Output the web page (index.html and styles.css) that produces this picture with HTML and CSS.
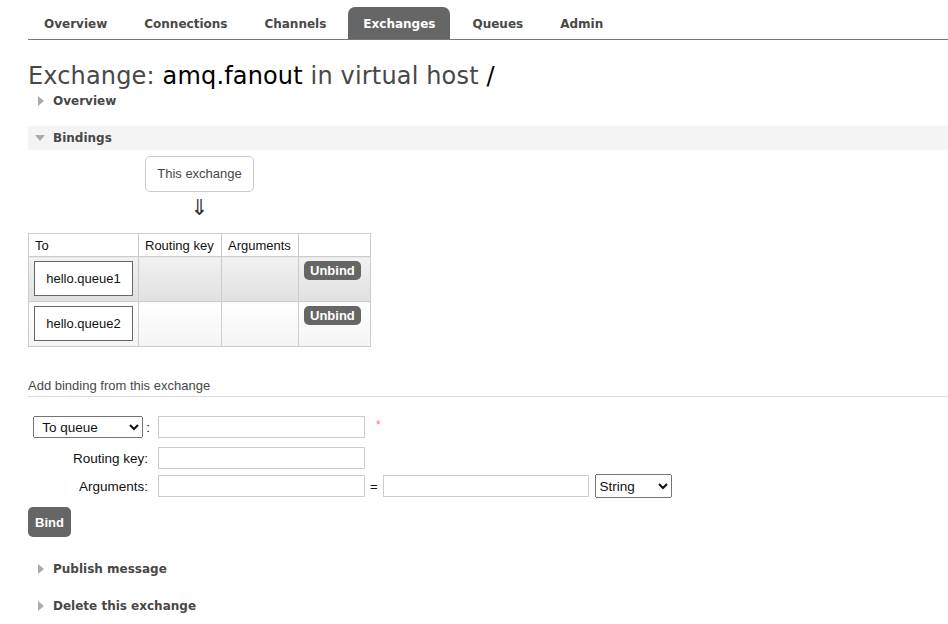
FILE: index.html
```html
<!DOCTYPE html>
<html>
<head>
<meta charset="utf-8">
<title>Exchange: amq.fanout</title>
<link rel="stylesheet" href="styles.css">
</head>
<body>
<div class="page">
  <nav class="tabs">
    <a class="tab">Overview</a>
    <a class="tab">Connections</a>
    <a class="tab">Channels</a>
    <a class="tab active">Exchanges</a>
    <a class="tab">Queues</a>
    <a class="tab">Admin</a>
  </nav>

  <h1 class="title">Exchange: <b>amq.fanout</b> in virtual host <b>/</b></h1>

  <section class="section">
    <h2 class="sec-head"><span class="tri-right"></span>Overview</h2>
  </section>

  <section class="section">
    <h2 class="sec-head open"><span class="tri-down"></span>Bindings</h2>
    <div class="sec-body">
      <div class="diagram">
        <div class="this-ex">This exchange</div>
        <div class="arrow">&#8659;</div>
        <table class="bind-table">
          <colgroup>
            <col class="c1"><col class="c2"><col class="c3"><col class="c4">
          </colgroup>
          <thead>
            <tr><th>To</th><th>Routing key</th><th>Arguments</th><th></th></tr>
          </thead>
          <tbody>
            <tr class="alt1">
              <td><span class="queue-box">hello.queue1</span></td>
              <td></td><td></td>
              <td><button class="btn-sm">Unbind</button></td>
            </tr>
            <tr class="alt2">
              <td><span class="queue-box">hello.queue2</span></td>
              <td></td><td></td>
              <td><button class="btn-sm">Unbind</button></td>
            </tr>
          </tbody>
        </table>
      </div>

      <h3 class="sub-head">Add binding from this exchange</h3>

      <form class="bind-form">
        <div class="frow r1">
          <div class="lbl">
            <select class="sel-dest"><option>To queue</option><option>To exchange</option></select>:
          </div>
          <div class="fld">
            <input class="inp" type="text">
            <span class="req">*</span>
          </div>
        </div>
        <div class="frow r2">
          <div class="lbl">Routing key:</div>
          <div class="fld"><input class="inp" type="text"></div>
        </div>
        <div class="frow r3">
          <div class="lbl">Arguments:</div>
          <div class="fld">
            <input class="inp" type="text">
            <span class="eq">=</span>
            <input class="inp inp2" type="text">
            <select class="sel-type"><option>String</option><option>Number</option><option>Boolean</option></select>
          </div>
        </div>
        <button class="btn" type="button">Bind</button>
      </form>
    </div>
  </section>

  <section class="section">
    <h2 class="sec-head"><span class="tri-right"></span>Publish message</h2>
  </section>

  <section class="section">
    <h2 class="sec-head"><span class="tri-right"></span>Delete this exchange</h2>
  </section>
</div>
</body>
</html>
```

FILE: styles.css
```css
html, body {
  margin: 0;
  padding: 0;
  background: #fff;
}
body {
  font-family: "Liberation Sans", Arial, sans-serif;
  font-size: 13px;
  color: #484848;
  overflow: hidden;
}
.page {
  padding-left: 28px;
}

/* tabs */
.tabs {
  display: flex;
  padding-top: 7px;
  padding-left: 1px;
  border-bottom: 1px solid #777;
}
.tab {
  display: block;
  height: 32px;
  line-height: 34px;
  padding: 0 15px;
  margin-right: 7px;
  font-family: "DejaVu Sans", Verdana, sans-serif;
  font-weight: bold;
  font-size: 12px;
  color: #484848;
  border-radius: 7px 7px 0 0;
}
.tab.active {
  background: #666;
  color: #fff;
}

/* title */
.title {
  margin: 23px 0 0;
  font-family: "DejaVu Sans", Verdana, sans-serif;
  font-size: 24px;
  line-height: 26px;
  letter-spacing: 0.16px;
  font-weight: normal;
  color: #484848;
}
.title b {
  font-weight: normal;
  color: #000;
}

/* sections */
.section {
  margin-bottom: 14px;
}
.sec-head {
  display: flex;
  align-items: center;
  height: 23px;
  margin: 0;
  font-family: "DejaVu Sans", Verdana, sans-serif;
  font-size: 12px;
  font-weight: bold;
  color: #484848;
}
.sec-head.open {
  height: 24px;
  background: #f4f4f4;
}
.tri-right {
  width: 0;
  height: 0;
  border-left: 6px solid #aaa;
  border-top: 5px solid transparent;
  border-bottom: 5px solid transparent;
  margin-left: 10px;
  margin-right: 9px;
}
.tri-down {
  width: 0;
  height: 0;
  border-top: 6px solid #aaa;
  border-left: 5px solid transparent;
  border-right: 5px solid transparent;
  margin-left: 7px;
  margin-right: 8px;
}
.sec-body {
  padding-top: 6px;
  padding-bottom: 6px;
}

/* diagram */
.diagram {
  display: inline-flex;
  flex-direction: column;
  align-items: center;
}
.this-ex {
  height: 36px;
  box-sizing: border-box;
  line-height: 34px;
  padding: 0 11px;
  border: 1px solid #ccc;
  border-radius: 5px;
  color: #484848;
}
.arrow {
  height: 41px;
  line-height: 32px;
  font-family: "DejaVu Sans", sans-serif;
  font-size: 22px;
  color: #333;
}
.bind-table {
  border-collapse: collapse;
  table-layout: fixed;
  width: 342px;
}
.bind-table col.c1 { width: 110px; }
.bind-table col.c2 { width: 83px; }
.bind-table col.c3 { width: 77px; }
.bind-table col.c4 { width: 72px; }
.bind-table th,
.bind-table td {
  border: 1px solid #ccc;
}
.bind-table th {
  height: 22px;
  padding: 0 6px;
  text-align: left;
  font-weight: normal;
  color: #111;
  background: #fff;
  white-space: nowrap;
}
.bind-table td {
  padding: 4px 5px 5px;
  vertical-align: top;
}
.alt1 td {
  background: linear-gradient(#f2f2f2, #e0e0e0);
}
.alt2 td {
  background: linear-gradient(#fff, #f4f4f4);
}
.queue-box {
  display: block;
  height: 35px;
  box-sizing: border-box;
  line-height: 33px;
  border: 1px solid #666;
  background: #fff;
  text-align: center;
  color: #111;
}
.btn-sm {
  display: block;
  height: 19px;
  padding: 0 6px;
  border: 0;
  border-radius: 5px;
  background: #666;
  color: #fff;
  font-family: "Liberation Sans", Arial, sans-serif;
  font-weight: bold;
  font-size: 13px;
  line-height: 18px;
}

/* add binding */
.sub-head {
  margin: 31px 0 0;
  padding-bottom: 2px;
  font-size: 13px;
  line-height: 16px;
  font-weight: normal;
  color: #484848;
  border-bottom: 1px solid #ddd;
}
.bind-form {
  margin-top: 19px;
}
.frow {
  display: grid;
  grid-template-columns: 122px auto;
  column-gap: 8px;
  align-items: center;
}
.frow.r1 { margin-bottom: 9px; }
.frow.r2 { margin-bottom: 5px; }
.lbl {
  text-align: right;
  padding-right: 2px;
  font-size: 13.5px;
  color: #111;
  white-space: nowrap;
}
.r1 .lbl {
  display: flex;
  justify-content: flex-end;
  align-items: center;
  gap: 3px;
  padding-right: 0;
}
.fld {
  display: flex;
  align-items: center;
}
.inp {
  width: 207px;
  height: 22px;
  box-sizing: border-box;
  margin: 0;
  border: 1px solid #ccc;
  padding: 1px 3px;
  font: inherit;
}
.inp2 {
  width: 206px;
}
.req {
  margin-left: 11px;
  margin-top: -5px;
  color: #f77;
  font-size: 12px;
}
.eq {
  margin: 0 5px 0 5px;
  color: #111;
}
.sel-dest {
  width: 110px;
  height: 22px;
  margin: 0;
  padding-left: 4px;
  font-family: "Liberation Sans", Arial, sans-serif;
  font-size: 13.5px;
  color: #111;
}
.sel-type {
  width: 77px;
  height: 24px;
  margin: 0 0 0 6px;
  font-family: "Liberation Sans", Arial, sans-serif;
  font-size: 13.5px;
  color: #111;
}
.btn {
  display: block;
  margin-top: 9px;
  height: 30px;
  padding: 0 7px;
  border: 0;
  border-radius: 5px;
  background: #666;
  color: #fff;
  font-family: "Liberation Sans", Arial, sans-serif;
  font-weight: bold;
  font-size: 13px;
}
```
